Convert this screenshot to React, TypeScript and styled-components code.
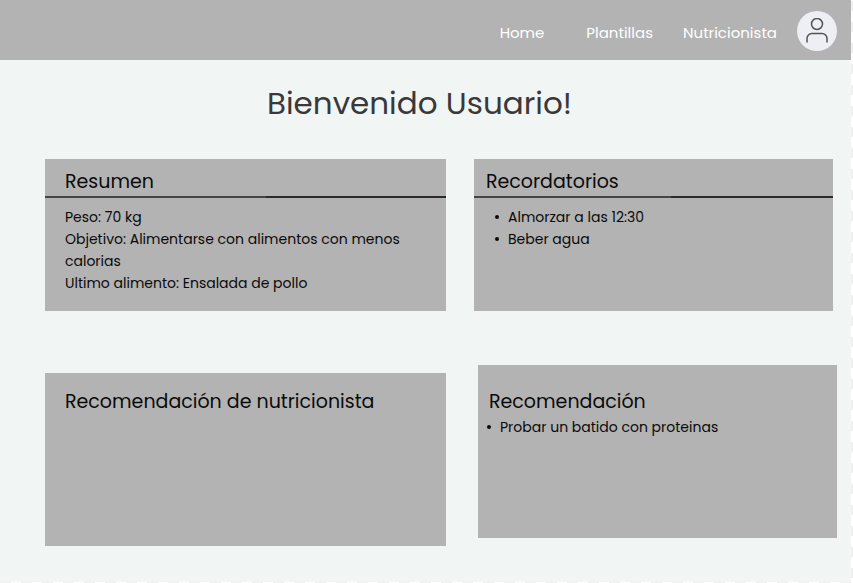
import React from "react";
import styled, { createGlobalStyle } from "styled-components";

const GlobalStyle = createGlobalStyle`
  *, *::before, *::after { box-sizing: border-box; }
  html, body, #root { height: 100%; }
  body {
    margin: 0;
    font-family: Poppins, Inter, "Open Sans", sans-serif;
    color: #0a0a0a;
  }
`;

const Canvas = styled.div`
  display: flex;
  min-height: 100%;
  padding: 0 2px 1px 0;
  background: #fff repeating-conic-gradient(#efefef 0 25%, #fff 0 50%) 0 1px / 21px 21px;
`;

const Sheet = styled.div`
  flex: 1;
  background: #f1f5f4;
`;

const TopBar = styled.header`
  display: flex;
  align-items: center;
  justify-content: flex-end;
  height: 60px;
  padding: 2px 14px 0 0;
  background: #b3b3b3;
`;

const Nav = styled.nav`
  display: flex;
  align-items: center;
  gap: 30px;
  margin-right: 20px;
  padding-top: 4px;
`;

const NavLink = styled.a<{ $wide?: boolean }>`
  margin-right: ${(p) => (p.$wide ? "12px" : "0")};
  color: #fff;
  font-size: 15px;
  line-height: 24px;
  text-decoration: none;
`;

const Avatar = styled.button`
  display: grid;
  place-items: center;
  width: 40px;
  height: 40px;
  padding: 0;
  border: 0;
  border-radius: 50%;
  background: #eeeff4;
  color: #545456;
  cursor: pointer;
`;

const Title = styled.h1`
  margin: 19px 0 32px;
  padding-right: 12px;
  color: #3a3838;
  font-size: 31px;
  font-weight: 400;
  line-height: 48px;
  text-align: center;
`;

const CardRow = styled.div<{ $shifted?: boolean }>`
  display: grid;
  grid-template-columns: 401fr 359fr;
  align-items: start;
  gap: ${(p) => (p.$shifted ? "32px" : "28px")};
  margin-bottom: ${(p) => (p.$shifted ? "36px" : "54px")};
  padding: ${(p) => (p.$shifted ? "0 14px 0 45px" : "0 18px 0 45px")};
`;

const Card = styled.section<{ $tall?: boolean; $lowered?: boolean }>`
  min-height: ${(p) => (p.$tall ? "173px" : "152px")};
  margin-top: ${(p) => (p.$lowered ? "8px" : "0")};
  background: #b3b3b3;
`;

const CardTitle = styled.h2<{ $top: number; $inset: number }>`
  margin: 0;
  padding: ${(p) => p.$top}px 0 0 ${(p) => p.$inset}px;
  font-size: 19px;
  font-weight: 400;
  line-height: 29px;
`;

const Rule = styled.hr`
  height: 2px;
  margin: 0 0 8px;
  border: 0;
  background: linear-gradient(90deg, #454346 55%, #2b292c 55%);
`;

const Facts = styled.div`
  padding: 0 40px 0 20px;
  font-size: 14px;
  line-height: 22px;
`;

const Fact = styled.p`
  margin: 0;
`;

const BulletList = styled.ul<{ $inset: number }>`
  margin: 0;
  padding: 0 0 0 ${(p) => p.$inset}px;
  list-style: none;
  font-size: 14px;
  line-height: 22px;
`;

const Bullet = styled.li`
  display: flex;
  align-items: center;
  gap: 9px;

  &::before {
    content: "";
    width: 4px;
    height: 4px;
    border-radius: 50%;
    background: currentColor;
  }
`;

const UserIcon = () => (
  <svg width="24" height="26" viewBox="0 0 24 26" fill="none" stroke="currentColor" strokeWidth="1.5" aria-hidden="true">
    <circle cx="12" cy="6" r="5.5" />
    <path d="M2 24.5v-4a5 5 0 0 1 5-5h10a5 5 0 0 1 5 5v4" />
  </svg>
);

export default function App() {
  return (
    <>
      <GlobalStyle />
      <Canvas>
        <Sheet>
          <TopBar>
            <Nav>
              <NavLink href="#home" $wide>Home</NavLink>
              <NavLink href="#plantillas">Plantillas</NavLink>
              <NavLink href="#nutricionista">Nutricionista</NavLink>
            </Nav>
            <Avatar type="button" aria-label="Usuario">
              <UserIcon />
            </Avatar>
          </TopBar>
          <main>
            <Title>Bienvenido Usuario!</Title>
            <CardRow>
              <Card>
                <CardTitle $top={8} $inset={20}>Resumen</CardTitle>
                <Rule />
                <Facts>
                  <Fact>Peso: 70 kg</Fact>
                  <Fact>Objetivo: Alimentarse con alimentos con menos calorias</Fact>
                  <Fact>Ultimo alimento: Ensalada de pollo</Fact>
                </Facts>
              </Card>
              <Card>
                <CardTitle $top={8} $inset={12}>Recordatorios</CardTitle>
                <Rule />
                <BulletList $inset={21}>
                  <Bullet>Almorzar a las 12:30</Bullet>
                  <Bullet>Beber agua</Bullet>
                </BulletList>
              </Card>
            </CardRow>
            <CardRow $shifted>
              <Card $tall $lowered>
                <CardTitle $top={14} $inset={20}>Recomendación de nutricionista</CardTitle>
              </Card>
              <Card $tall>
                <CardTitle $top={22} $inset={11}>Recomendación</CardTitle>
                <BulletList $inset={9}>
                  <Bullet>Probar un batido con proteinas</Bullet>
                </BulletList>
              </Card>
            </CardRow>
          </main>
        </Sheet>
      </Canvas>
    </>
  );
}
